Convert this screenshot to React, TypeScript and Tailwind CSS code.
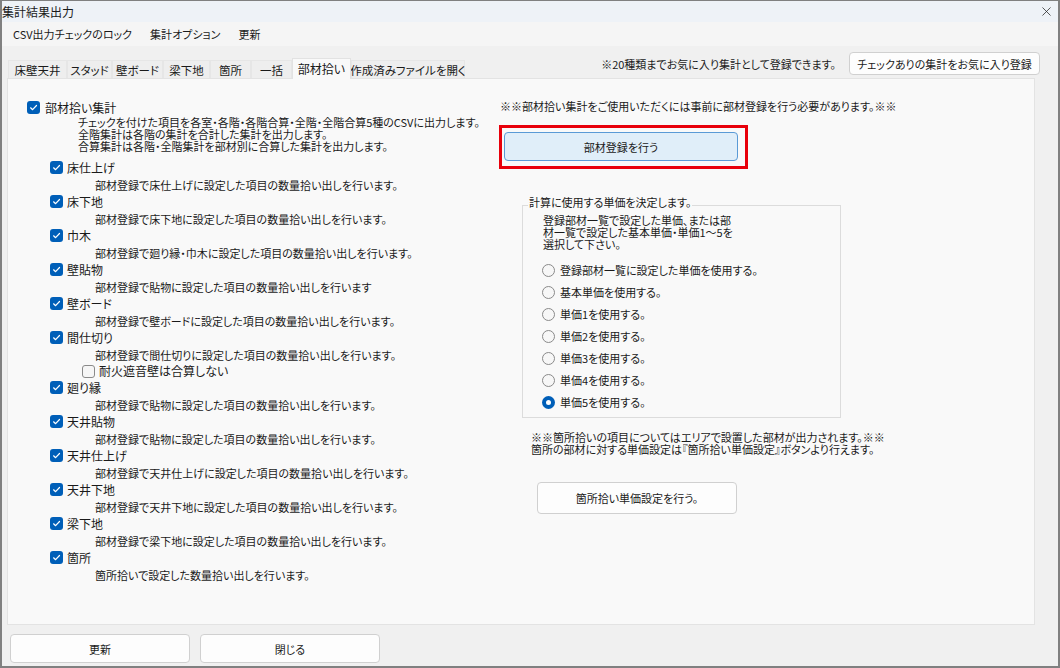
import React from 'react';
import { X } from 'lucide-react';

const tabs = [
  { label: '床壁天井', w: 'w-[59px]' },
  { label: 'スタッド', w: 'w-[45px]' },
  { label: '壁ボード', w: 'w-[51px]' },
  { label: '梁下地', w: 'w-[47px]' },
  { label: '箇所', w: 'w-[41px]' },
  { label: '一括', w: 'w-[41px]' },
  { label: '部材拾い', w: 'w-[59px]', active: true },
  { label: '作成済みファイルを開く', w: 'w-[114px]' },
];

const items = [
  { label: '床仕上げ', desc: '部材登録で床仕上げに設定した項目の数量拾い出しを行います。' },
  { label: '床下地', desc: '部材登録で床下地に設定した項目の数量拾い出しを行います。' },
  { label: '巾木', desc: '部材登録で廻り縁・巾木に設定した項目の数量拾い出しを行います。' },
  { label: '壁貼物', desc: '部材登録で貼物に設定した項目の数量拾い出しを行います' },
  { label: '壁ボード', desc: '部材登録で壁ボードに設定した項目の数量拾い出しを行います。' },
  { label: '間仕切り', desc: '部材登録で間仕切りに設定した項目の数量拾い出しを行います。', extra: '耐火遮音壁は合算しない' },
  { label: '廻り縁', desc: '部材登録で貼物に設定した項目の数量拾い出しを行います。' },
  { label: '天井貼物', desc: '部材登録で貼物に設定した項目の数量拾い出しを行います。' },
  { label: '天井仕上げ', desc: '部材登録で天井仕上げに設定した項目の数量拾い出しを行います。' },
  { label: '天井下地', desc: '部材登録で天井下地に設定した項目の数量拾い出しを行います。' },
  { label: '梁下地', desc: '部材登録で梁下地に設定した項目の数量拾い出しを行います。' },
  { label: '箇所', desc: '箇所拾いで設定した数量拾い出しを行います。' },
];

const prices = [
  '登録部材一覧に設定した単価を使用する。',
  '基本単価を使用する。',
  '単価1を使用する。',
  '単価2を使用する。',
  '単価3を使用する。',
  '単価4を使用する。',
  '単価5を使用する。',
];

function CheckBox({ checked = true }: { checked?: boolean }) {
  if (!checked) {
    return <span className="h-[13px] w-[13px] shrink-0 rounded-[3px] border border-[#8a8a8a] bg-[#f6f6f6]" />;
  }
  return (
    <span className="flex h-[13px] w-[13px] shrink-0 items-center justify-center rounded-[3px] bg-[#005fb8]">
      <svg width="9" height="9" viewBox="0 0 9 9">
        <path d="M1.6 4.8 L3.6 6.7 L7.5 2.5" fill="none" stroke="#fff" strokeWidth="1.2" strokeLinecap="round" strokeLinejoin="round" />
      </svg>
    </span>
  );
}

function Radio({ selected }: { selected: boolean }) {
  if (selected) {
    return (
      <span className="flex h-[13px] w-[13px] shrink-0 items-center justify-center rounded-full bg-[#005fb8]">
        <span className="h-[5px] w-[5px] rounded-full bg-white" />
      </span>
    );
  }
  return <span className="h-[13px] w-[13px] shrink-0 rounded-full border border-[#8a8a8a] bg-[#f7f7f7]" />;
}

export default function App() {
  return (
    <div className="flex h-[668px] w-[1060px] flex-col border-2 border-t border-[#808080] bg-[#f0f0f0] font-['Noto_Sans_CJK_JP','Noto_Sans_CJK_SC',sans-serif] text-[11px] leading-[12px] text-[#1a1a1a] [font-feature-settings:'palt']">
      {/* title bar */}
      <div className="flex h-[21px] shrink-0 items-center justify-between bg-[#eef2f7] pr-[4px]">
        <span className="text-[12px]">集計結果出力</span>
        <X size={15} strokeWidth={1.2} className="text-[#222]" />
      </div>

      {/* menu */}
      <div className="flex h-[24px] shrink-0 items-center bg-[#f5f5f5] pl-[2px]">
        <span className="px-[9px]">CSV出力チェックのロック</span>
        <span className="px-[9px]">集計オプション</span>
        <span className="px-[9px]">更新</span>
      </div>

      {/* tab row */}
      <div className="flex h-[32px] shrink-0 items-stretch justify-between pl-[6px] pr-[18px]">
        <div className="flex items-end">
          {tabs.map((t) =>
            t.active ? (
              <div
                key={t.label}
                className={`${t.w} relative z-10 -mb-px flex h-[21px] items-center justify-center whitespace-nowrap border border-b-0 border-[#e2e2e2] bg-[#f9f9f9] text-[12px]`}
              >
                {t.label}
              </div>
            ) : (
              <div
                key={t.label}
                className={`${t.w} flex h-[18px] items-center justify-center whitespace-nowrap border border-b-0 border-[#e6e6e6] bg-[#eeeeee] text-[11.5px]`}
              >
                {t.label}
              </div>
            )
          )}
        </div>
        <div className="flex items-start gap-[13px] pt-[6px]">
          <span className="pt-[6px]">※20種類までお気に入り集計として登録できます。</span>
          <button className="flex h-[23px] w-[191px] items-center justify-center rounded-[4px] border border-[#d0d0d0] bg-[#fdfdfd]">
            チェックありの集計をお気に入り登録
          </button>
        </div>
      </div>

      {/* panel */}
      <div className="ml-[5px] mr-[23px] flex flex-1 border border-[#e3e3e3] bg-[#f9f9f9]">
        {/* left column */}
        <div className="w-[491px] shrink-0 pl-[19px] pt-[20px]">
          <div className="flex h-[17px] items-center gap-[5px]">
            <CheckBox />
            <span className="text-[12px]">部材拾い集計</span>
          </div>
          <div className="pl-[51px]">
            <div>チェックを付けた項目を各室・各階・各階合算・全階・全階合算5種のCSVに出力します。</div>
            <div>全階集計は各階の集計を合計した集計を出力します。</div>
            <div>合算集計は各階・全階集計を部材別に合算した集計を出力します。</div>
          </div>
          <div className="mt-[7px] pl-[23px]">
            {items.map((it) => (
              <div key={it.label}>
                <div className="flex h-[17px] items-center gap-[4px]">
                  <CheckBox />
                  <span className="text-[12px]">{it.label}</span>
                </div>
                <div className="flex h-[17px] items-center pl-[45px]">{it.desc}</div>
                {it.extra && (
                  <div className="flex h-[16px] items-center gap-[4px] pl-[32px]">
                    <CheckBox checked={false} />
                    <span className="text-[12px]">{it.extra}</span>
                  </div>
                )}
              </div>
            ))}
          </div>
        </div>

        {/* right column */}
        <div className="flex flex-col items-start pt-[21px]">
          <div className="pl-[1px]">※※部材拾い集計をご使用いただくには事前に部材登録を行う必要があります。※※</div>

          <div className="mt-[13px] border-[3px] border-[#e8000b] pb-[5px] pl-[2px] pr-[7px] pt-[4px]">
            <button className="flex h-[29px] w-[234px] items-center justify-center rounded-[4px] border border-[#5a9ad6] bg-[#e0eef9]">
              部材登録を行う
            </button>
          </div>

          <fieldset className="ml-[23px] mt-[27px] w-[319px] border border-[#dcdcdc] pb-[4px]">
            <legend className="ml-[5px] px-[1px] pb-[6px]">計算に使用する単価を決定します。</legend>
            <div className="pl-[20px]">
              <div>登録部材一覧で設定した単価、または部</div>
              <div>材一覧で設定した基本単価・単価1～5を</div>
              <div>選択して下さい。</div>
            </div>
            <div className="mt-[9px] pl-[19px]">
              {prices.map((p, i) => (
                <div key={p} className="flex h-[22px] items-center gap-[5px]">
                  <Radio selected={i === prices.length - 1} />
                  <span>{p}</span>
                </div>
              ))}
            </div>
          </fieldset>

          <div className="ml-[32px] mt-[13px]">
            <div>※※箇所拾いの項目についてはエリアで設置した部材が出力されます。※※</div>
            <div>箇所の部材に対する単価設定は『箇所拾い単価設定』ボタンより行えます。</div>
          </div>

          <button className="ml-[38px] mt-[27px] flex h-[32px] w-[200px] items-center justify-center rounded-[4px] border border-[#d0d0d0] bg-[#fdfdfd]">
            箇所拾い単価設定を行う。
          </button>
        </div>
      </div>

      {/* bottom buttons */}
      <div className="flex h-[41px] shrink-0 gap-[10px] pl-[8px] pt-[9px]">
        <button className="flex h-[29px] w-[180px] items-center justify-center rounded-[4px] border border-[#d0d0d0] bg-[#fdfdfd]">
          更新
        </button>
        <button className="flex h-[29px] w-[180px] items-center justify-center rounded-[4px] border border-[#d0d0d0] bg-[#fdfdfd]">
          閉じる
        </button>
      </div>
    </div>
  );
}
